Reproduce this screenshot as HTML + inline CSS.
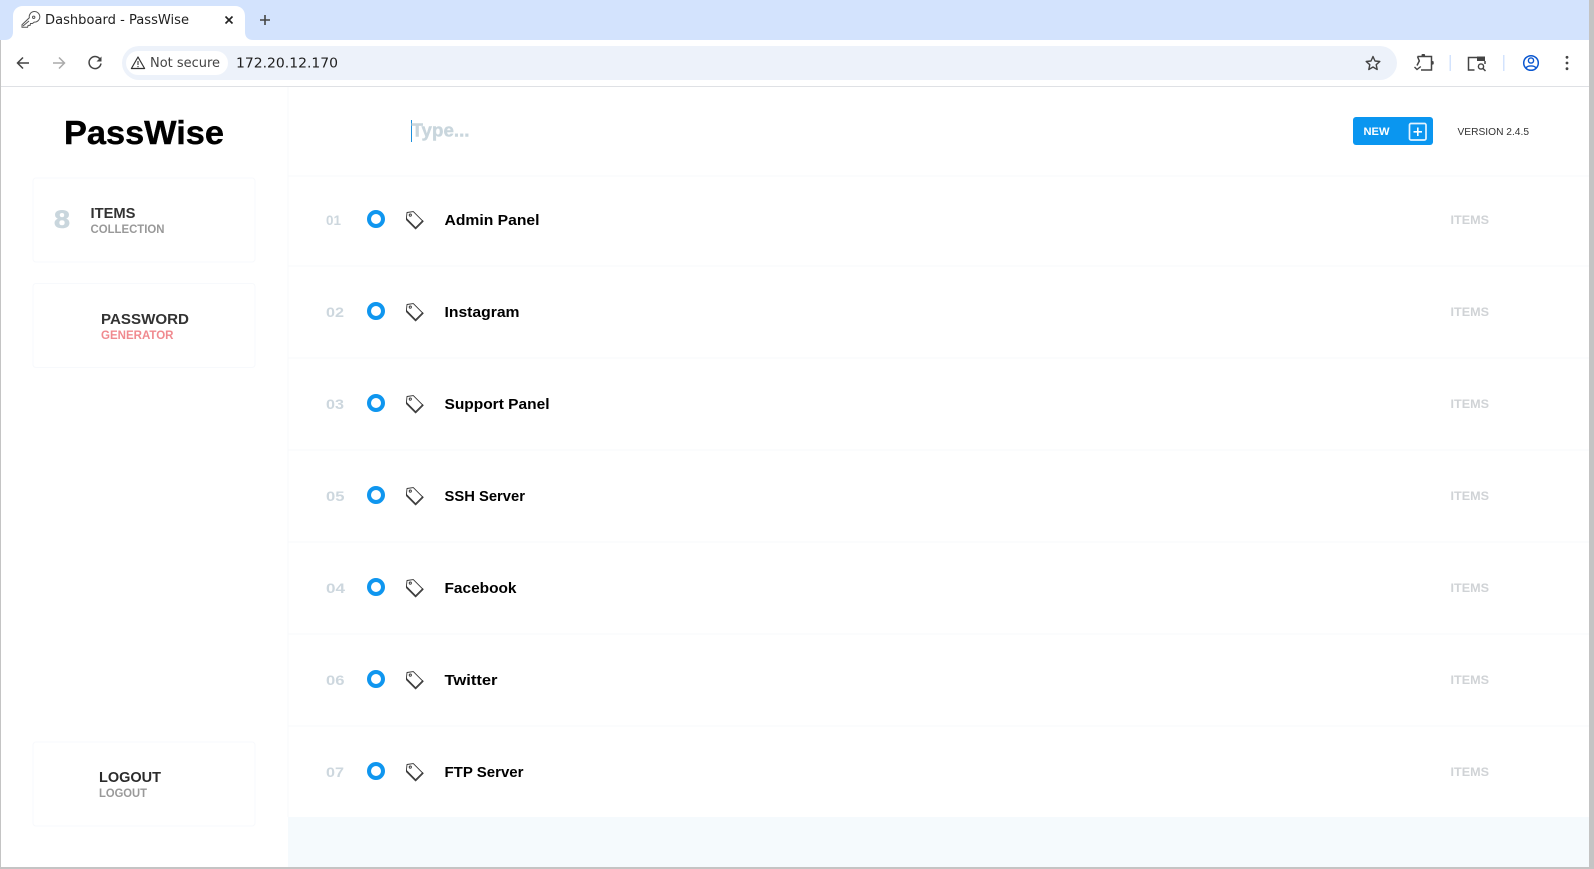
<!DOCTYPE html>
<html><head><meta charset="utf-8"><title>Dashboard - PassWise</title>
<style>
html,body{margin:0;padding:0;width:1594px;height:869px;overflow:hidden;background:#fff}
svg{position:absolute;left:0;top:0;display:block}
.m{font-family:"Liberation Sans",sans-serif;font-weight:700}
.c{font-family:"DejaVu Sans",sans-serif;font-size:13px}
</style></head><body>
<svg width="1594" height="869" viewBox="0 0 1594 869" xmlns="http://www.w3.org/2000/svg">
<defs>
<g id="tag" fill="none" stroke="#333" stroke-width="0.9" stroke-linejoin="round">
<path d="M407 212.500l6.300-.9 9.200 9.200-6.900 6.900-9.200-9.200z" fill="#fff"/>
<path d="M406.600 217.800l-.1 2 9.100 9.100 7.600-7.600-.8-.8"/>
<circle cx="410.300" cy="215.100" r="1.100"/>
</g>
</defs>
<!-- chrome -->
<rect width="1594" height="40" fill="#d3e3fd"/>
<rect y="40" width="1594" height="46" fill="#fff"/>
<rect y="86" width="1594" height="1" fill="#dfe1e5"/>
<path d="M5 40c5 0 8-3 8-8V16c0-6 4-10 10-10h212c6 0 10 4 10 10v16c0 5 3 8 8 8z" fill="#fff"/>
<g fill="none" stroke="#555" stroke-width="1">
<path d="M29.300 17.800a5.300 5.300 0 1 1 4.900 4.300l-1.700 1.400h-2l-.4 1.900h-2l-.5 1.800h-5.600v-2.500z"/><circle cx="33.700" cy="17.300" r="1.200"/><path d="M23 26l6-5"/>
</g>
<text class="c" x="45" y="24" fill="#1f1f1f" textLength="144" lengthAdjust="spacingAndGlyphs">Dashboard - PassWise</text>
<path d="M225.500 16.500l7 7M232.500 16.500l-7 7" stroke="#222" stroke-width="1.600" fill="none"/>
<path d="M265 15v10M260 20h10" stroke="#444" stroke-width="1.600" fill="none"/>
<path d="M29 63H18M23 57.500L17.500 63l5.500 5.500" stroke="#444" stroke-width="1.500" fill="none"/>
<path d="M53 63h11M59 57.500l5.500 5.500-5.500 5.500" stroke="#aaa" stroke-width="1.500" fill="none"/>
<path d="M100.500 60a6 6 0 1 0 .5 3.500" stroke="#444" stroke-width="1.500" fill="none"/><path d="M101.500 56.500v5h-5z" fill="#444"/>
<rect x="122" y="46" width="1275" height="34" rx="17" fill="#edf2fa"/>
<rect x="126" y="51" width="102" height="24" rx="12" fill="#fff"/>
<path d="M138 57l6.600 11.500h-13.200z" fill="none" stroke="#333" stroke-width="1.200" stroke-linejoin="round"/><path d="M138 61v4M138 66v1.200" stroke="#333" stroke-width="1.100"/>
<text class="c" x="150" y="67" fill="#444" textLength="70" lengthAdjust="spacingAndGlyphs">Not secure</text>
<text class="c" x="236" y="67.500" fill="#1f1f1f" textLength="102" lengthAdjust="spacingAndGlyphs">172.20.12.170</text>
<path d="M1373 56.500l2 4.500 4.800.5-3.600 3.200 1 4.800-4.200-2.500-4.200 2.500 1-4.800-3.600-3.200 4.800-.5z" fill="none" stroke="#444" stroke-width="1.400" stroke-linejoin="round"/>
<path d="M1417.500 56.500h14v13.500h-10.500M1417.500 56.500l1.800 4.500-2.300 4.500" fill="none" stroke="#444" stroke-width="1.500"/><rect x="1421.500" y="54" width="3.600" height="2.500" rx="1" fill="#444"/><rect x="1431.500" y="61" width="2.200" height="3.600" rx="1" fill="#444"/><path d="M1414.500 67l2.500 2.500 3.800-3" fill="none" stroke="#444" stroke-width="1.400"/>
<rect x="1449.500" y="55" width="1.500" height="16" fill="#d3e3fd"/>
<path d="M1477 57.500h-8.500v12.500h6" fill="none" stroke="#444" stroke-width="1.500"/><rect x="1477" y="56.500" width="8" height="4.500" fill="#444"/><path d="M1485 61v3" stroke="#444" stroke-width="1.500"/><circle cx="1481" cy="66.500" r="2.600" fill="none" stroke="#444" stroke-width="1.400"/><path d="M1483 68.500l2.500 2.500" stroke="#444" stroke-width="1.500"/>
<rect x="1503" y="55" width="1.500" height="16" fill="#d3e3fd"/>
<circle cx="1531" cy="63" r="7.300" fill="none" stroke="#0b57d0" stroke-width="1.500"/><circle cx="1531" cy="60.500" r="2.600" fill="none" stroke="#0b57d0" stroke-width="1.400"/><path d="M1526 68c1.500-2.800 8.500-2.800 10 0" fill="none" stroke="#0b57d0" stroke-width="1.400"/>
<circle cx="1567" cy="57.300" r="1.400" fill="#444"/><circle cx="1567" cy="63" r="1.400" fill="#444"/><circle cx="1567" cy="68.700" r="1.400" fill="#444"/>

<!-- page -->
<rect x="287.500" y="87" width="1" height="730" fill="#f7f9fb"/>
<rect x="288" y="817" width="1301" height="50" fill="#f5fafd"/>
<g fill="#f7f9fb"><rect x="288" y="175.500" width="1301" height="1"/><rect x="288" y="265.500" width="1301" height="1"/><rect x="288" y="357.500" width="1301" height="1"/><rect x="288" y="449.500" width="1301" height="1"/><rect x="288" y="541.500" width="1301" height="1"/><rect x="288" y="633.500" width="1301" height="1"/><rect x="288" y="725.500" width="1301" height="1"/></g>
<text class="m" x="64" y="144" font-size="33" fill="#000" stroke="#000" stroke-width="0.4" textLength="160" lengthAdjust="spacingAndGlyphs">PassWise</text>
<g fill="#fff" stroke="#f7f9fc"><rect x="33" y="178" width="222" height="84" rx="3"/><rect x="33" y="283.500" width="222" height="84" rx="3"/><rect x="33" y="742" width="222" height="84" rx="3"/></g>
<text class="m" x="54" y="228" font-size="25" fill="#c9d6dd" stroke="#c9d6dd" stroke-width="0.6" textLength="16" lengthAdjust="spacingAndGlyphs">8</text>
<text class="m" x="90.500" y="218" font-size="14.500" fill="#333" textLength="45" lengthAdjust="spacingAndGlyphs">ITEMS</text>
<text class="m" x="90.500" y="233" font-size="11.700" fill="#999" textLength="74" lengthAdjust="spacingAndGlyphs">COLLECTION</text>
<text class="m" x="101" y="324" font-size="14.500" fill="#333" textLength="88" lengthAdjust="spacingAndGlyphs">PASSWORD</text>
<text class="m" x="101" y="339" font-size="11.700" fill="#f08a8f" textLength="72.500" lengthAdjust="spacingAndGlyphs">GENERATOR</text>
<text class="m" x="99" y="782" font-size="14.500" fill="#2b2b2b" textLength="62" lengthAdjust="spacingAndGlyphs">LOGOUT</text>
<text class="m" x="99" y="797" font-size="11.700" fill="#999" textLength="48" lengthAdjust="spacingAndGlyphs">LOGOUT</text>
<rect x="411" y="120" width="1" height="22" fill="#1b8fdc"/>
<text class="m" x="411.500" y="136.500" font-size="18" fill="#c9d6dd" stroke="#c9d6dd" stroke-width="0.4" textLength="58" lengthAdjust="spacingAndGlyphs">Type...</text>
<rect x="1353" y="117" width="80" height="28" rx="3" fill="#0a96f0"/>
<text class="m" x="1363.500" y="135" font-size="11" fill="#fff" textLength="26" lengthAdjust="spacingAndGlyphs">NEW</text>
<rect x="1409.500" y="123.500" width="16.500" height="16.500" rx="1.500" fill="none" stroke="#e3f3ff" stroke-width="1.700"/>
<path d="M1417.800 127.500v8.500M1413.500 131.800h8.500" stroke="#fff" stroke-width="1.600"/>
<text x="1457.500" y="135" font-family="Liberation Sans,sans-serif" font-size="10" fill="#333" textLength="71.500" lengthAdjust="spacingAndGlyphs">VERSION 2.4.5</text>

<!-- rows -->
<g>
<text class="m" x="326" y="225" font-size="14" fill="#cdd7de" textLength="15" lengthAdjust="spacingAndGlyphs">01</text>
<circle cx="376" cy="219" r="7" fill="none" stroke="#0f96ef" stroke-width="4"/>
<use href="#tag"/>
<text class="m" x="444.500" y="225" font-size="14.600" fill="#000" textLength="95" lengthAdjust="spacingAndGlyphs">Admin Panel</text>
<text class="m" x="1450.500" y="224" font-size="12.300" fill="#d0d3d6" textLength="38.500" lengthAdjust="spacingAndGlyphs">ITEMS</text>
</g>
<g transform="translate(0 92)">
<text class="m" x="326" y="225" font-size="14" fill="#cdd7de" textLength="18" lengthAdjust="spacingAndGlyphs">02</text>
<circle cx="376" cy="219" r="7" fill="none" stroke="#0f96ef" stroke-width="4"/>
<use href="#tag"/>
<text class="m" x="444.500" y="225" font-size="14.600" fill="#000" textLength="75" lengthAdjust="spacingAndGlyphs">Instagram</text>
<text class="m" x="1450.500" y="224" font-size="12.300" fill="#d0d3d6" textLength="38.500" lengthAdjust="spacingAndGlyphs">ITEMS</text>
</g>
<g transform="translate(0 184)">
<text class="m" x="326" y="225" font-size="14" fill="#cdd7de" textLength="18" lengthAdjust="spacingAndGlyphs">03</text>
<circle cx="376" cy="219" r="7" fill="none" stroke="#0f96ef" stroke-width="4"/>
<use href="#tag"/>
<text class="m" x="444.500" y="225" font-size="14.600" fill="#000" textLength="105" lengthAdjust="spacingAndGlyphs">Support Panel</text>
<text class="m" x="1450.500" y="224" font-size="12.300" fill="#d0d3d6" textLength="38.500" lengthAdjust="spacingAndGlyphs">ITEMS</text>
</g>
<g transform="translate(0 276)">
<text class="m" x="326" y="225" font-size="14" fill="#cdd7de" textLength="18.500" lengthAdjust="spacingAndGlyphs">05</text>
<circle cx="376" cy="219" r="7" fill="none" stroke="#0f96ef" stroke-width="4"/>
<use href="#tag"/>
<text class="m" x="444.500" y="225" font-size="14.600" fill="#000" textLength="80.500" lengthAdjust="spacingAndGlyphs">SSH Server</text>
<text class="m" x="1450.500" y="224" font-size="12.300" fill="#d0d3d6" textLength="38.500" lengthAdjust="spacingAndGlyphs">ITEMS</text>
</g>
<g transform="translate(0 368)">
<text class="m" x="326" y="225" font-size="14" fill="#cdd7de" textLength="19" lengthAdjust="spacingAndGlyphs">04</text>
<circle cx="376" cy="219" r="7" fill="none" stroke="#0f96ef" stroke-width="4"/>
<use href="#tag"/>
<text class="m" x="444.500" y="225" font-size="14.600" fill="#000" textLength="72" lengthAdjust="spacingAndGlyphs">Facebook</text>
<text class="m" x="1450.500" y="224" font-size="12.300" fill="#d0d3d6" textLength="38.500" lengthAdjust="spacingAndGlyphs">ITEMS</text>
</g>
<g transform="translate(0 460)">
<text class="m" x="326" y="225" font-size="14" fill="#cdd7de" textLength="18.500" lengthAdjust="spacingAndGlyphs">06</text>
<circle cx="376" cy="219" r="7" fill="none" stroke="#0f96ef" stroke-width="4"/>
<use href="#tag"/>
<text class="m" x="444.500" y="225" font-size="14.600" fill="#000" textLength="53" lengthAdjust="spacingAndGlyphs">Twitter</text>
<text class="m" x="1450.500" y="224" font-size="12.300" fill="#d0d3d6" textLength="38.500" lengthAdjust="spacingAndGlyphs">ITEMS</text>
</g>
<g transform="translate(0 552)">
<text class="m" x="326" y="225" font-size="14" fill="#cdd7de" textLength="18" lengthAdjust="spacingAndGlyphs">07</text>
<circle cx="376" cy="219" r="7" fill="none" stroke="#0f96ef" stroke-width="4"/>
<use href="#tag"/>
<text class="m" x="444.500" y="225" font-size="14.600" fill="#000" textLength="79" lengthAdjust="spacingAndGlyphs">FTP Server</text>
<text class="m" x="1450.500" y="224" font-size="12.300" fill="#d0d3d6" textLength="38.500" lengthAdjust="spacingAndGlyphs">ITEMS</text>
</g>

<!-- window edges -->
<rect x="0" y="40" width="1" height="829" fill="#c4c4c4"/>
<rect x="1589" y="0" width="5" height="869" fill="#c4c4c4"/>
<rect x="0" y="867" width="1594" height="2" fill="#c4c4c4"/>
</svg>
</body></html>
